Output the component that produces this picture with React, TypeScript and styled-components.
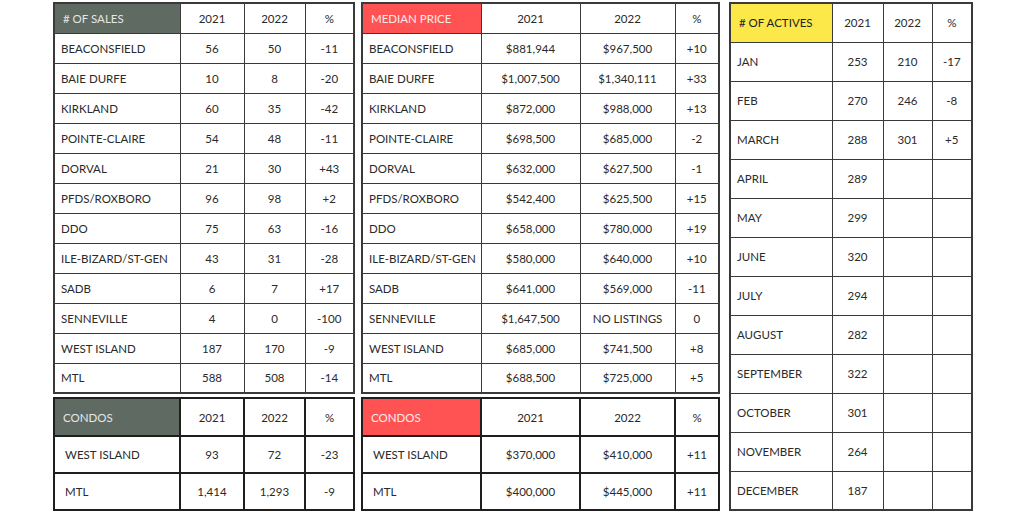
import React from "react";
import styled, { createGlobalStyle } from "styled-components";

const GlobalStyle = createGlobalStyle`
  html, body {
    margin: 0;
    padding: 0;
    background: #ffffff;
  }
  body {
    font-family: "Lato", "Liberation Sans", sans-serif;
    color: #222;
  }
`;

const Page = styled.div`
  width: 1024px;
  height: 512px;
  display: flex;
  align-items: flex-start;
  padding: 2px 0 0 53px;
  box-sizing: border-box;
  gap: 6px;
`;

const Column = styled.div<{ $width: number; $ml?: number }>`
  display: flex;
  flex-direction: column;
  gap: 3px;
  width: ${(p) => p.$width}px;
  margin-left: ${(p) => p.$ml ?? 0}px;
`;

const Table = styled.table<{ $thick?: boolean }>`
  width: 100%;
  table-layout: fixed;
  border-collapse: collapse;
  border: ${(p) => (p.$thick ? "2px solid #1e1e1e" : "2px solid #3a3a3a")};
  font-size: 11.5px;
`;

const Row = styled.tr<{ $h: number }>`
  height: ${(p) => p.$h}px;
`;

const Cell = styled.td<{ $thick?: boolean }>`
  border: ${(p) => (p.$thick ? "2px solid #1e1e1e" : "1.5px solid #3a3a3a")};
  text-align: center;
  padding: 0 4px;
  white-space: nowrap;
  color: #2a2a2a;
`;

const NameCell = styled(Cell)<{ $pad: number }>`
  text-align: left;
  padding-left: ${(p) => p.$pad}px;
`;

const HeadCell = styled(Cell)<{ $bg: string; $fg: string }>`
  text-align: left;
  padding-left: 8px;
  background: ${(p) => p.$bg};
  color: ${(p) => p.$fg};
`;

type Line = [string, string, string, string];

const sales: Line[] = [
  ["BEACONSFIELD", "56", "50", "-11"],
  ["BAIE DURFE", "10", "8", "-20"],
  ["KIRKLAND", "60", "35", "-42"],
  ["POINTE-CLAIRE", "54", "48", "-11"],
  ["DORVAL", "21", "30", "+43"],
  ["PFDS/ROXBORO", "96", "98", "+2"],
  ["DDO", "75", "63", "-16"],
  ["ILE-BIZARD/ST-GEN", "43", "31", "-28"],
  ["SADB", "6", "7", "+17"],
  ["SENNEVILLE", "4", "0", "-100"],
  ["WEST ISLAND", "187", "170", "-9"],
  ["MTL", "588", "508", "-14"],
];

const prices: Line[] = [
  ["BEACONSFIELD", "$881,944", "$967,500", "+10"],
  ["BAIE DURFE", "$1,007,500", "$1,340,111", "+33"],
  ["KIRKLAND", "$872,000", "$988,000", "+13"],
  ["POINTE-CLAIRE", "$698,500", "$685,000", "-2"],
  ["DORVAL", "$632,000", "$627,500", "-1"],
  ["PFDS/ROXBORO", "$542,400", "$625,500", "+15"],
  ["DDO", "$658,000", "$780,000", "+19"],
  ["ILE-BIZARD/ST-GEN", "$580,000", "$640,000", "+10"],
  ["SADB", "$641,000", "$569,000", "-11"],
  ["SENNEVILLE", "$1,647,500", "NO LISTINGS", "0"],
  ["WEST ISLAND", "$685,000", "$741,500", "+8"],
  ["MTL", "$688,500", "$725,000", "+5"],
];

const condoSales: Line[] = [
  ["WEST ISLAND", "93", "72", "-23"],
  ["MTL", "1,414", "1,293", "-9"],
];

const condoPrices: Line[] = [
  ["WEST ISLAND", "$370,000", "$410,000", "+11"],
  ["MTL", "$400,000", "$445,000", "+11"],
];

const actives: Line[] = [
  ["JAN", "253", "210", "-17"],
  ["FEB", "270", "246", "-8"],
  ["MARCH", "288", "301", "+5"],
  ["APRIL", "289", "", ""],
  ["MAY", "299", "", ""],
  ["JUNE", "320", "", ""],
  ["JULY", "294", "", ""],
  ["AUGUST", "282", "", ""],
  ["SEPTEMBER", "322", "", ""],
  ["OCTOBER", "301", "", ""],
  ["NOVEMBER", "264", "", ""],
  ["DECEMBER", "187", "", ""],
];

type StatsProps = {
  title: string;
  bg: string;
  fg: string;
  cols: number[];
  lines: Line[];
  headH: number;
  rowH: number;
  thick?: boolean;
  namePad?: number;
};

const StatsTable = ({ title, bg, fg, cols, lines, headH, rowH, thick, namePad = 6 }: StatsProps) => (
  <Table $thick={thick}>
    <colgroup>
      {cols.map((w, i) => (
        <col key={i} style={{ width: w }} />
      ))}
    </colgroup>
    <tbody>
      <Row $h={headH}>
        <HeadCell $thick={thick} $bg={bg} $fg={fg}>
          {title}
        </HeadCell>
        <Cell $thick={thick}>2021</Cell>
        <Cell $thick={thick}>2022</Cell>
        <Cell $thick={thick}>%</Cell>
      </Row>
      {lines.map((l) => (
        <Row key={l[0]} $h={rowH}>
          <NameCell $thick={thick} $pad={namePad}>
            {l[0]}
          </NameCell>
          <Cell $thick={thick}>{l[1]}</Cell>
          <Cell $thick={thick}>{l[2]}</Cell>
          <Cell $thick={thick}>{l[3]}</Cell>
        </Row>
      ))}
    </tbody>
  </Table>
);

const GREEN = "#5e6a62";
const RED = "#ff5353";
const YELLOW = "#fde84a";

const App = () => (
  <>
    <GlobalStyle />
    <Page>
      <Column $width={302}>
        <StatsTable title="# OF SALES" bg={GREEN} fg="#e6e6e6" cols={[126, 64, 61, 49]} lines={sales} headH={30} rowH={30} />
        <StatsTable title="CONDOS" bg={GREEN} fg="#e6e6e6" cols={[126, 64, 61, 49]} lines={condoSales} headH={38} rowH={37} thick namePad={10} />
      </Column>
      <Column $width={358}>
        <StatsTable title="MEDIAN PRICE" bg={RED} fg="#fbeaea" cols={[119, 99, 95, 44]} lines={prices} headH={30} rowH={30} />
        <StatsTable title="CONDOS" bg={RED} fg="#fbeaea" cols={[119, 99, 95, 44]} lines={condoPrices} headH={38} rowH={37} thick namePad={10} />
      </Column>
      <Column $width={243} $ml={4}>
        <StatsTable title="# OF ACTIVES" bg={YELLOW} fg="#222" cols={[102, 51, 49, 40]} lines={actives} headH={39} rowH={39} />
      </Column>
    </Page>
  </>
);

export default App;
